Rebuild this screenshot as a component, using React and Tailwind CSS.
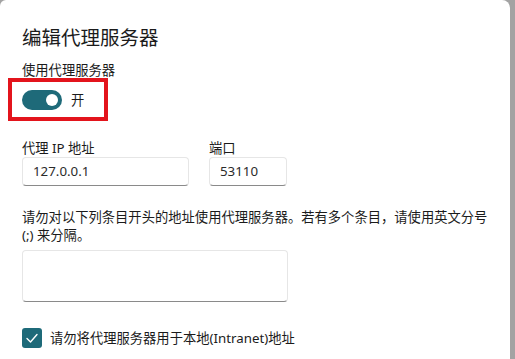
export default function App() {
  const font = { fontFamily: '"Noto Sans", "Noto Sans CJK SC", sans-serif' };
  return (
    <div className="w-[515px] h-[359px] bg-[#a3a3a3] flex overflow-hidden">
      <div
        className="w-[510px] h-full bg-white rounded-tl-[6px] rounded-tr-[8px] pl-[22px] flex flex-col text-[#1b1b1b]"
        style={font}
      >
        <div className="mt-[26px] text-[19.5px] leading-[24px]">编辑代理服务器</div>
        <div className="mt-[11px] text-[13.3px] leading-[18px]">使用代理服务器</div>
        <div className="-ml-[14px] mt-[-1px] w-[100px] h-[43px] border-4 border-[#e3141c] flex items-center pl-[10px]">
          <div className="w-[40px] h-[20px] rounded-full bg-[#1e6a79] flex items-center justify-end pr-[4px]">
            <div className="w-[12px] h-[12px] rounded-full bg-white" />
          </div>
          <span className="ml-[9px] text-[13.3px] leading-[18px]">开</span>
        </div>
        <div className="mt-[18px] flex gap-[20px]">
          <div className="flex flex-col">
            <span className="text-[13.3px] leading-[18px]">代理 IP 地址</span>
            <div className="w-[167px] h-[29px] border border-[#e6e6e6] border-b-[#8a8a8a] rounded-[4px] pl-[10px] flex items-center text-[13.3px] text-[#2b2b2b]">
              127.0.0.1
            </div>
          </div>
          <div className="flex flex-col">
            <span className="text-[13.3px] leading-[18px]">端口</span>
            <div className="w-[78px] h-[29px] border border-[#e6e6e6] border-b-[#8a8a8a] rounded-[4px] pl-[10px] flex items-center text-[13.3px] text-[#2b2b2b]">
              53110
            </div>
          </div>
        </div>
        <p className="mt-[22px] w-[480px] text-[13.3px] leading-[18px]">
          请勿对以下列条目开头的地址使用代理服务器。若有多个条目，请使用英文分号
          <br />
          (;) 来分隔。
        </p>
        <div className="mt-[6px] w-[266px] h-[52px] border border-[#e6e6e6] border-b-[#8a8a8a] rounded-[4px]" />
        <div className="mt-[26px] flex items-center">
          <div className="w-[20px] h-[20px] rounded-[3px] bg-[#1e6a79] flex items-center justify-center">
            <svg width="14" height="14" viewBox="0 0 14 14" fill="none">
              <path d="M2 7.5 L5.5 11 L12 3.5" stroke="white" strokeWidth="1.4" strokeLinecap="round" strokeLinejoin="round" />
            </svg>
          </div>
          <span className="ml-[8px] text-[13.3px] leading-[18px]">请勿将代理服务器用于本地(Intranet)地址</span>
        </div>
      </div>
    </div>
  );
}
